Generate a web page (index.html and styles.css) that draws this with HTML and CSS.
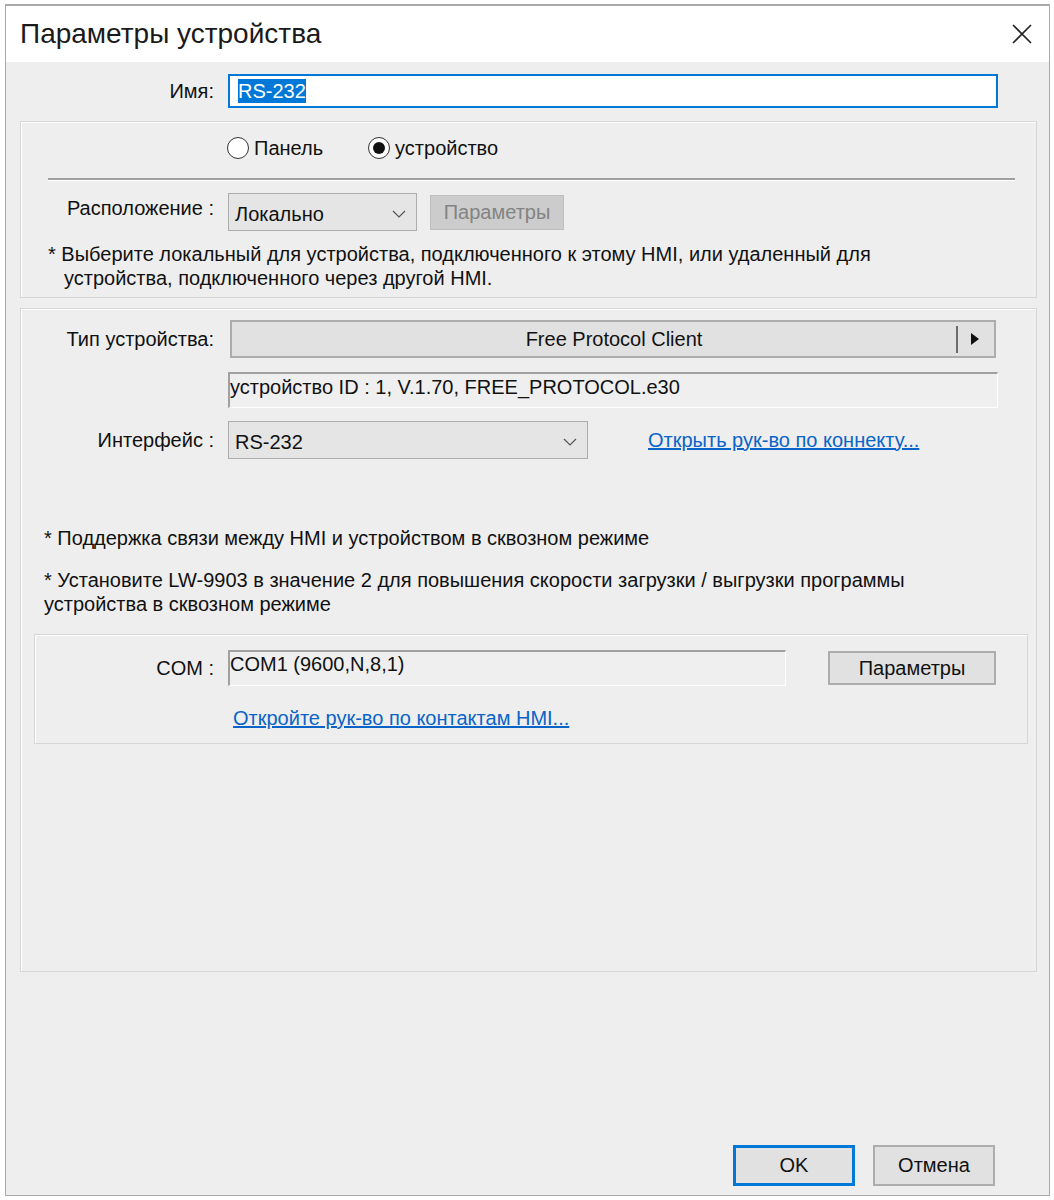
FILE: index.html
```html
<!DOCTYPE html>
<html lang="ru">
<head>
    <meta charset="UTF-8">
    <title>Параметры устройства</title>
    <link rel="stylesheet" href="styles.css">
</head>
<body>
    <div class="window">
        <div class="titlebar">
            <span class="title">Параметры устройства</span>
            <svg class="close" width="22" height="22" viewBox="0 0 22 22">
                <path d="M2 2 L20 20 M20 2 L2 20" stroke="#222" stroke-width="1.6" fill="none"/>
            </svg>
        </div>

        <div class="content">
            <div class="row name-row">
                <label class="lbl">Имя:</label>
                <div class="name-input"><span class="selected">RS-232</span></div>
            </div>

            <div class="group group-top">
                <div class="radios">
                    <span class="radio"></span><span class="radio-text">Панель</span>
                    <span class="radio checked"></span><span class="radio-text">устройство</span>
                </div>
                <div class="separator"></div>
                <div class="row">
                    <label class="lbl loc-lbl">Расположение :</label>
                    <div class="select small">
                        <span>Локально</span>
                        <svg width="14" height="8" viewBox="0 0 14 8"><path d="M1 1 L7 7 L13 1" stroke="#555" stroke-width="1.2" fill="none"/></svg>
                    </div>
                    <button class="btn disabled">Параметры</button>
                </div>
                <p class="note hanging">* Выберите локальный для устройства, подключенного к этому HMI, или удаленный для устройства, подключенного через другой HMI.</p>
            </div>

            <div class="group group-main">
                <div class="row">
                    <label class="lbl">Тип устройства:</label>
                    <div class="device-bar">
                        <span class="device-name">Free Protocol Client</span>
                        <span class="bar-sep"></span>
                        <svg class="bar-arrow" width="10" height="14" viewBox="0 0 10 14"><path d="M1 1 L9 7 L1 13 Z" fill="#111"/></svg>
                    </div>
                </div>
                <div class="row">
                    <span class="lbl"></span>
                    <div class="field info">устройство ID : 1, V.1.70, FREE_PROTOCOL.e30</div>
                </div>
                <div class="row iface-row">
                    <label class="lbl">Интерфейс :</label>
                    <div class="select wide">
                        <span>RS-232</span>
                        <svg width="14" height="8" viewBox="0 0 14 8"><path d="M1 1 L7 7 L13 1" stroke="#555" stroke-width="1.2" fill="none"/></svg>
                    </div>
                    <a class="link connector-link" href="#">Открыть рук-во по коннекту...</a>
                </div>

                <p class="note first">* Поддержка связи между HMI и устройством в сквозном режиме</p>
                <p class="note second">* Установите LW-9903 в значение 2 для повышения скорости загрузки / выгрузки программы устройства в сквозном режиме</p>

                <div class="group com-group">
                    <div class="row">
                        <label class="lbl com-lbl">COM :</label>
                        <div class="field com-field">COM1 (9600,N,8,1)</div>
                        <button class="btn com-btn">Параметры</button>
                    </div>
                    <a class="link hmi-link" href="#">Откройте рук-во по контактам HMI...</a>
                </div>
            </div>

            <div class="footer">
                <button class="btn dlg-btn default">OK</button>
                <button class="btn dlg-btn">Отмена</button>
            </div>
        </div>
    </div>
</body>
</html>
```

FILE: styles.css
```css
* {
    margin: 0;
    padding: 0;
    box-sizing: border-box;
}

body {
    background: #ffffff;
    font-family: "Liberation Sans", Arial, sans-serif;
    font-size: 20px;
    color: #111;
}

.window {
    margin: 4px 4px 0 5px;
    height: 1192px;
    border: 1px solid #a9a9a9;
    border-top: 2px solid #a9a9a9;
    background: #eeeeee;
    display: flex;
    flex-direction: column;
}

.titlebar {
    height: 56px;
    background: #ffffff;
    display: flex;
    align-items: center;
    justify-content: space-between;
    padding: 0 16px 0 14px;
}

.title {
    font-size: 28px;
    color: #1a1a1a;
}

.content {
    flex: 1;
    padding: 12px 12px 0 14px;
    display: flex;
    flex-direction: column;
}

.row {
    display: flex;
    align-items: center;
    gap: 14px;
}

.lbl {
    width: 193px;
    flex-shrink: 0;
    text-align: right;
}

.name-row .lbl {
    width: 194px;
}

.name-input {
    width: 770px;
    height: 34px;
    background: #ffffff;
    border: 2px solid #0078d7;
    display: flex;
    align-items: center;
    padding-left: 8px;
}

.selected {
    background: #0078d7;
    color: #ffffff;
    line-height: 24px;
}

.group {
    border: 1px solid #d6d6d6;
    box-shadow: inset 1px 1px 0 #ffffff;
}

.group-top {
    margin-top: 13px;
    height: 177px;
    padding-top: 13px;
}

.radios {
    display: flex;
    align-items: center;
    height: 26px;
    padding-left: 206px;
}

.radio {
    width: 22px;
    height: 22px;
    border: 1px solid #333;
    border-radius: 50%;
    background: #ffffff;
    display: flex;
    align-items: center;
    justify-content: center;
}

.radio.checked::after {
    content: "";
    width: 12px;
    height: 12px;
    border-radius: 50%;
    background: #111;
}

.radio-text {
    margin-left: 5px;
    margin-right: 45px;
}

.separator {
    margin: 17px 21px 12px 27px;
    border-top: 2px solid #a0a0a0;
    border-bottom: 1px solid #ffffff;
}

.loc-lbl {
    margin-top: -8px;
}

.select {
    height: 38px;
    background: #e5e5e5;
    border: 1px solid #adadad;
    display: flex;
    align-items: center;
    justify-content: space-between;
    padding: 4px 10px 0 6px;
}

.select.small {
    width: 189px;
}

.select.wide {
    width: 360px;
}

.btn {
    font-family: "Liberation Sans", Arial, sans-serif;
    font-size: 20px;
    background: #e1e1e1;
    border: 2px solid #adadad;
    color: #111;
}

.btn.disabled {
    width: 134px;
    height: 35px;
    background: #cccccc;
    border: 1px solid #bfbfbf;
    color: #838383;
    margin-left: -1px;
}

.note {
    line-height: 24px;
    padding-left: 23px;
}

.note.hanging {
    margin-top: 11px;
    padding-left: 43px;
    text-indent: -16px;
    padding-right: 100px;
}

.group-main {
    margin-top: 10px;
    height: 664px;
    padding-top: 11px;
}

.device-bar {
    margin-left: 2px;
    width: 766px;
    height: 38px;
    background: #e1e1e1;
    border: 2px solid #adadad;
    display: flex;
    align-items: center;
}

.device-name {
    flex: 1;
    text-align: center;
    padding-left: 40px;
}

.bar-sep {
    width: 2px;
    height: 27px;
    background: #6d6d6d;
    margin-right: 12px;
}

.bar-arrow {
    margin-right: 14px;
}

.field {
    background: #efefef;
    border-top: 2px solid #a0a0a0;
    border-left: 2px solid #a0a0a0;
    border-bottom: 1px solid #ffffff;
    border-right: 1px solid #ffffff;
    display: flex;
    align-items: center;
}

.info {
    margin-top: 14px;
    width: 770px;
    height: 36px;
    padding-bottom: 6px;
}

.iface-row {
    margin-top: 13px;
}

.link {
    color: #0a64c8;
    text-decoration: underline;
}

.connector-link {
    margin-left: 46px;
}

.note.first {
    margin-top: 67px;
}

.note.second {
    margin-top: 18px;
    padding-right: 90px;
}

.com-group {
    margin: 18px 8px 0 13px;
    height: 110px;
    padding-top: 15px;
}

.com-lbl {
    width: 179px;
}

.com-field {
    width: 558px;
    height: 36px;
    align-items: flex-start;
    padding-top: 1px;
}

.com-btn {
    margin-left: 28px;
    width: 168px;
    height: 34px;
}

.hmi-link {
    display: inline-block;
    margin: 21px 0 0 198px;
}

.footer {
    margin-top: auto;
    margin-bottom: 9px;
    padding-right: 42px;
    display: flex;
    justify-content: flex-end;
    gap: 18px;
}

.dlg-btn {
    width: 122px;
    height: 41px;
}

.dlg-btn.default {
    border: 3px solid #0078d7;
}
```
